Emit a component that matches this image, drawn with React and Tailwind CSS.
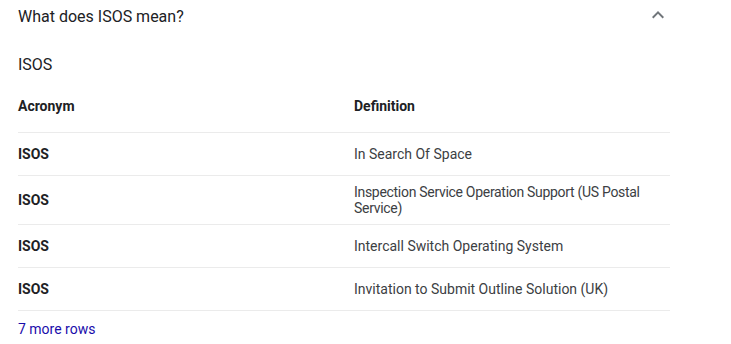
import React from "react";

const rows = [
  ["ISOS", "In Search Of Space", ""],
  ["ISOS", "Inspection Service Operation Support (US Postal Service)", "tracking-[-0.3px]"],
  ["ISOS", "Intercall Switch Operating System", ""],
  ["ISOS", "Invitation to Submit Outline Solution (UK)", ""],
];

export default function App() {
  return (
    <div className="w-[731px] h-[344px] bg-white overflow-hidden" style={{ fontFamily: "Roboto, Arial, sans-serif" }}>
      <div className="ml-[18px] w-[652px]">
        <div className="h-[34px] flex items-center justify-between">
          <span className="text-[16px] leading-[24px] text-[#202124]">What does ISOS mean?</span>
          <div className="w-[24px] h-[24px] flex items-center justify-center -mt-[4px]">
            <svg width="24" height="24" viewBox="0 0 24 24" fill="#70757a">
              <path d="M7.41 15.41 12 10.83l4.59 4.58L18 14l-6-6-6 6z" />
            </svg>
          </div>
        </div>
        <div className="mt-[19px] text-[16px] leading-[24px] text-[#202124]">ISOS</div>
        <div className="flex h-[56px] border-b border-[#ebebeb] pt-[21px] text-[14px] leading-[16px] font-bold text-[#202124]">
          <div className="w-[336px]">Acronym</div>
          <div className="w-[316px]">Definition</div>
        </div>
        {rows.map((r, i) => (
          <div key={i} className="flex items-center min-h-[43px] py-[8px] border-b border-[#ebebeb] text-[14px] leading-[16px]">
            <div className="w-[336px] font-bold text-[#202124]">{r[0]}</div>
            <div className={`w-[316px] text-[#3c4043] ${r[2]}`}>{r[1]}</div>
          </div>
        ))}
        <div className="mt-[10px] text-[14px] leading-[16px] text-[#1a0dab]">7 more rows</div>
      </div>
    </div>
  );
}
